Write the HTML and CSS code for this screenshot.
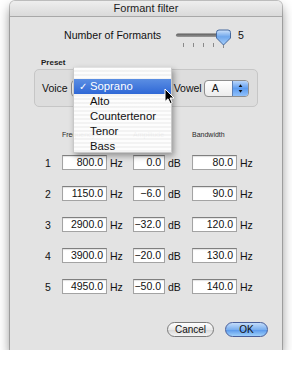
FILE: index.html
```html
<!DOCTYPE html>
<html>
<head>
<meta charset="utf-8">
<link rel="stylesheet" href="styles.css">
</head>
<body>
<div class="window">
  <div class="titlebar">Formant filter</div>
  <div class="content">
    <div class="formants">
      <span class="flabel">Number of Formants</span>
      <svg class="slider" width="62" height="24" viewBox="0 0 62 24">
        <defs>
          <linearGradient id="trk" x1="0" y1="0" x2="0" y2="1">
            <stop offset="0" stop-color="#5a5a5a"/>
            <stop offset="1" stop-color="#9a9a9a"/>
          </linearGradient>
          <linearGradient id="knb" x1="0" y1="0" x2="0" y2="1">
            <stop offset="0" stop-color="#cfe3fb"/>
            <stop offset="0.45" stop-color="#6fa7ec"/>
            <stop offset="1" stop-color="#a9d0fb"/>
          </linearGradient>
        </defs>
        <rect x="2" y="8.5" width="46" height="3.5" rx="1.75" fill="url(#trk)"/>
        <g stroke="#8a8a8a" stroke-width="1">
          <line x1="9.5" y1="18" x2="9.5" y2="22"/>
          <line x1="19.5" y1="18" x2="19.5" y2="22"/>
          <line x1="29.5" y1="18" x2="29.5" y2="22"/>
          <line x1="39.5" y1="18" x2="39.5" y2="22"/>
          <line x1="49.5" y1="18" x2="49.5" y2="23"/>
        </g>
        <path d="M42.5 7.5 Q42.5 5 45 5 L54 5 Q56.5 5 56.5 7.5 L56.5 13 L49.5 20 L42.5 13 Z" fill="url(#knb)" stroke="#45699e" stroke-width="1"/>
      </svg>
      <span class="fval">5</span>
    </div>

    <div class="preset-label">Preset</div>
    <div class="group">
      <span class="glabel">Voice</span>
      <div class="popup voice-popup"></div>
      <span class="glabel vowel-label">Vowel</span>
      <div class="popup vowel-popup">
        <span class="ptext">A</span>
        <span class="parrows">
          <svg width="16" height="15" viewBox="0 0 16 15">
            <path d="M6 6 L8 3 L10 6 Z" fill="#111"/>
            <path d="M6 9 L8 12 L10 9 Z" fill="#111"/>
          </svg>
        </span>
      </div>
    </div>

    <div class="thead">
      <span></span>
      <span class="hdr">Frequency</span>
      <span></span>
      <span class="hdr">Amplitude</span>
      <span></span>
      <span class="hdr">Bandwidth</span>
      <span></span>
    </div>

    <div class="row first">
      <span class="num">1</span>
      <span class="field">800.0</span><span class="unit">Hz</span>
      <span class="field">0.0</span><span class="unit">dB</span>
      <span class="field">80.0</span><span class="unit">Hz</span>
    </div>
    <div class="row">
      <span class="num">2</span>
      <span class="field">1150.0</span><span class="unit">Hz</span>
      <span class="field">−6.0</span><span class="unit">dB</span>
      <span class="field">90.0</span><span class="unit">Hz</span>
    </div>
    <div class="row">
      <span class="num">3</span>
      <span class="field">2900.0</span><span class="unit">Hz</span>
      <span class="field">−32.0</span><span class="unit">dB</span>
      <span class="field">120.0</span><span class="unit">Hz</span>
    </div>
    <div class="row">
      <span class="num">4</span>
      <span class="field">3900.0</span><span class="unit">Hz</span>
      <span class="field">−20.0</span><span class="unit">dB</span>
      <span class="field">130.0</span><span class="unit">Hz</span>
    </div>
    <div class="row">
      <span class="num">5</span>
      <span class="field">4950.0</span><span class="unit">Hz</span>
      <span class="field">−50.0</span><span class="unit">dB</span>
      <span class="field">140.0</span><span class="unit">Hz</span>
    </div>

    <div class="buttons">
      <button class="btn cancel">Cancel</button>
      <button class="btn ok">OK</button>
    </div>
  </div>

  <div class="menu">
    <div class="mitem selected"><span class="check">✓</span>Soprano</div>
    <div class="mitem">Alto</div>
    <div class="mitem">Countertenor</div>
    <div class="mitem">Tenor</div>
    <div class="mitem">Bass</div>
  </div>

  <svg class="cursor" width="12" height="17" viewBox="0 0 12 17">
    <path d="M1 1 L1 13.5 L4 10.8 L6.2 15.6 L8.2 14.7 L6 10 L10 10 Z" fill="#000" stroke="#fff" stroke-width="1" stroke-linejoin="round"/>
  </svg>
</div>
</body>
</html>
```

FILE: styles.css
```css
* { box-sizing: border-box; }
html, body { margin: 0; padding: 0; background: #fff; }
body {
  font-family: "Liberation Sans", Arial, sans-serif;
  font-size: 10.5px;
  color: #111;
}

.window {
  position: relative;
  margin: 1px 0 0 10px;
  width: 272px;
  height: 349px;
  background: #e3e3e3;
  border-radius: 5px 5px 0 0;
  box-shadow: 0 6px 12px rgba(0,0,0,.45), 0 0 0 1px rgba(0,0,0,.22);
  display: flex;
  flex-direction: column;
}

.titlebar {
  height: 16px;
  line-height: 15px;
  text-align: center;
  font-size: 11px;
  color: #1d1d1d;
  background: linear-gradient(#eeeeee, #dadada);
  border-bottom: 1px solid #a8a8a8;
  border-radius: 5px 5px 0 0;
}

.content {
  flex: 1;
  display: flex;
  flex-direction: column;
}

.formants {
  display: flex;
  align-items: flex-start;
  height: 24px;
  margin-top: 8px;
  padding-left: 54px;
}
.flabel {
  width: 110px;
  line-height: 20px;
  font-size: 10.6px;
}
.slider { display: block; }
.fval {
  margin-left: 2px;
  line-height: 20px;
  font-size: 10.6px;
}

.preset-label {
  margin-top: 9px;
  padding-left: 31px;
  font-size: 8px;
  font-weight: bold;
  line-height: 10px;
  color: #222;
}

.group {
  margin: 1px 0 0 24px;
  width: 224px;
  height: 38px;
  border: 1px solid #c6c6c6;
  border-radius: 5px;
  background: #dddddd;
  display: flex;
  align-items: center;
  padding-left: 7px;
}
.glabel { line-height: 14px; }
.popup {
  height: 17px;
  border-radius: 4px;
  border: 1px solid #8e8e8e;
  background: linear-gradient(#ffffff, #ececec);
  display: flex;
  align-items: center;
}
.voice-popup { margin-left: 3px; width: 96px; }
.vowel-label { margin-left: 7px; }
.vowel-popup {
  margin-left: 2px;
  width: 45px;
  overflow: hidden;
}
.ptext {
  flex: 1;
  padding-left: 7px;
  line-height: 15px;
}
.parrows {
  width: 16px;
  height: 15px;
  background: linear-gradient(#b9d6fb, #5d9cf0 50%, #8fc0fa);
  border-left: 1px solid #5b7fb5;
  display: flex;
}

.thead {
  display: grid;
  grid-template-columns: 23px 45px 26px 32px 27px 45px 23px;
  margin-top: 23px;
  padding-left: 29px;
  height: 10px;
  line-height: 10px;
}
.hdr {
  font-size: 7px;
  color: #2a2a2a;
  white-space: nowrap;
}

.row {
  display: grid;
  grid-template-columns: 23px 45px 26px 32px 27px 45px 23px;
  align-items: center;
  padding-left: 29px;
  height: 15px;
  margin-top: 16px;
}
.row.first { margin-top: 15px; }
.num { padding-left: 6px; }
.field {
  height: 15px;
  line-height: 13px;
  background: #fff;
  border: 1px solid #a3a3a3;
  border-top-color: #7f7f7f;
  box-shadow: inset 0 1px 1px rgba(0,0,0,.12);
  text-align: right;
  padding-right: 3px;
  white-space: nowrap;
  overflow: hidden;
}
.unit { padding-left: 3px; }

.buttons {
  margin-top: auto;
  margin-bottom: 13px;
  display: flex;
  justify-content: flex-end;
  gap: 11px;
  padding-right: 14px;
}
.btn {
  height: 15px;
  padding: 0;
  border-radius: 8px;
  font-family: "Liberation Sans", Arial, sans-serif;
  font-size: 10px;
  line-height: 13px;
  color: #111;
}
.cancel {
  width: 47px;
  border: 1px solid #7a7a7a;
  background: linear-gradient(#ffffff, #e9e9e9 50%, #d6d6d6 51%, #f4f4f4);
}
.ok {
  width: 43px;
  border: 1px solid #4a5f9a;
  background: linear-gradient(#c3dcfa, #7cb0ef 50%, #5595ea 51%, #9fd0fb);
}

.menu {
  position: absolute;
  left: 63px;
  top: 66px;
  width: 99px;
  height: 86px;
  padding-top: 11px;
  background: repeating-linear-gradient(rgba(255,255,255,.94) 0 2px, rgba(244,244,244,.94) 2px 4px);
  border: 1px solid #c9c9c9;
  border-top-color: #e2e2e2;
  box-shadow: 2px 3px 6px rgba(0,0,0,.35);
  font-size: 11.3px;
  color: #111;
}
.mitem {
  height: 15px;
  line-height: 15px;
  padding-left: 16px;
  position: relative;
}
.mitem.selected {
  background: linear-gradient(#5b8ee3, #2f68d6);
  color: #fff;
}
.check {
  position: absolute;
  left: 5px;
  top: 0;
  font-family: "DejaVu Sans", sans-serif;
  font-size: 10px;
}

.cursor {
  position: absolute;
  left: 154px;
  top: 87px;
}
```
